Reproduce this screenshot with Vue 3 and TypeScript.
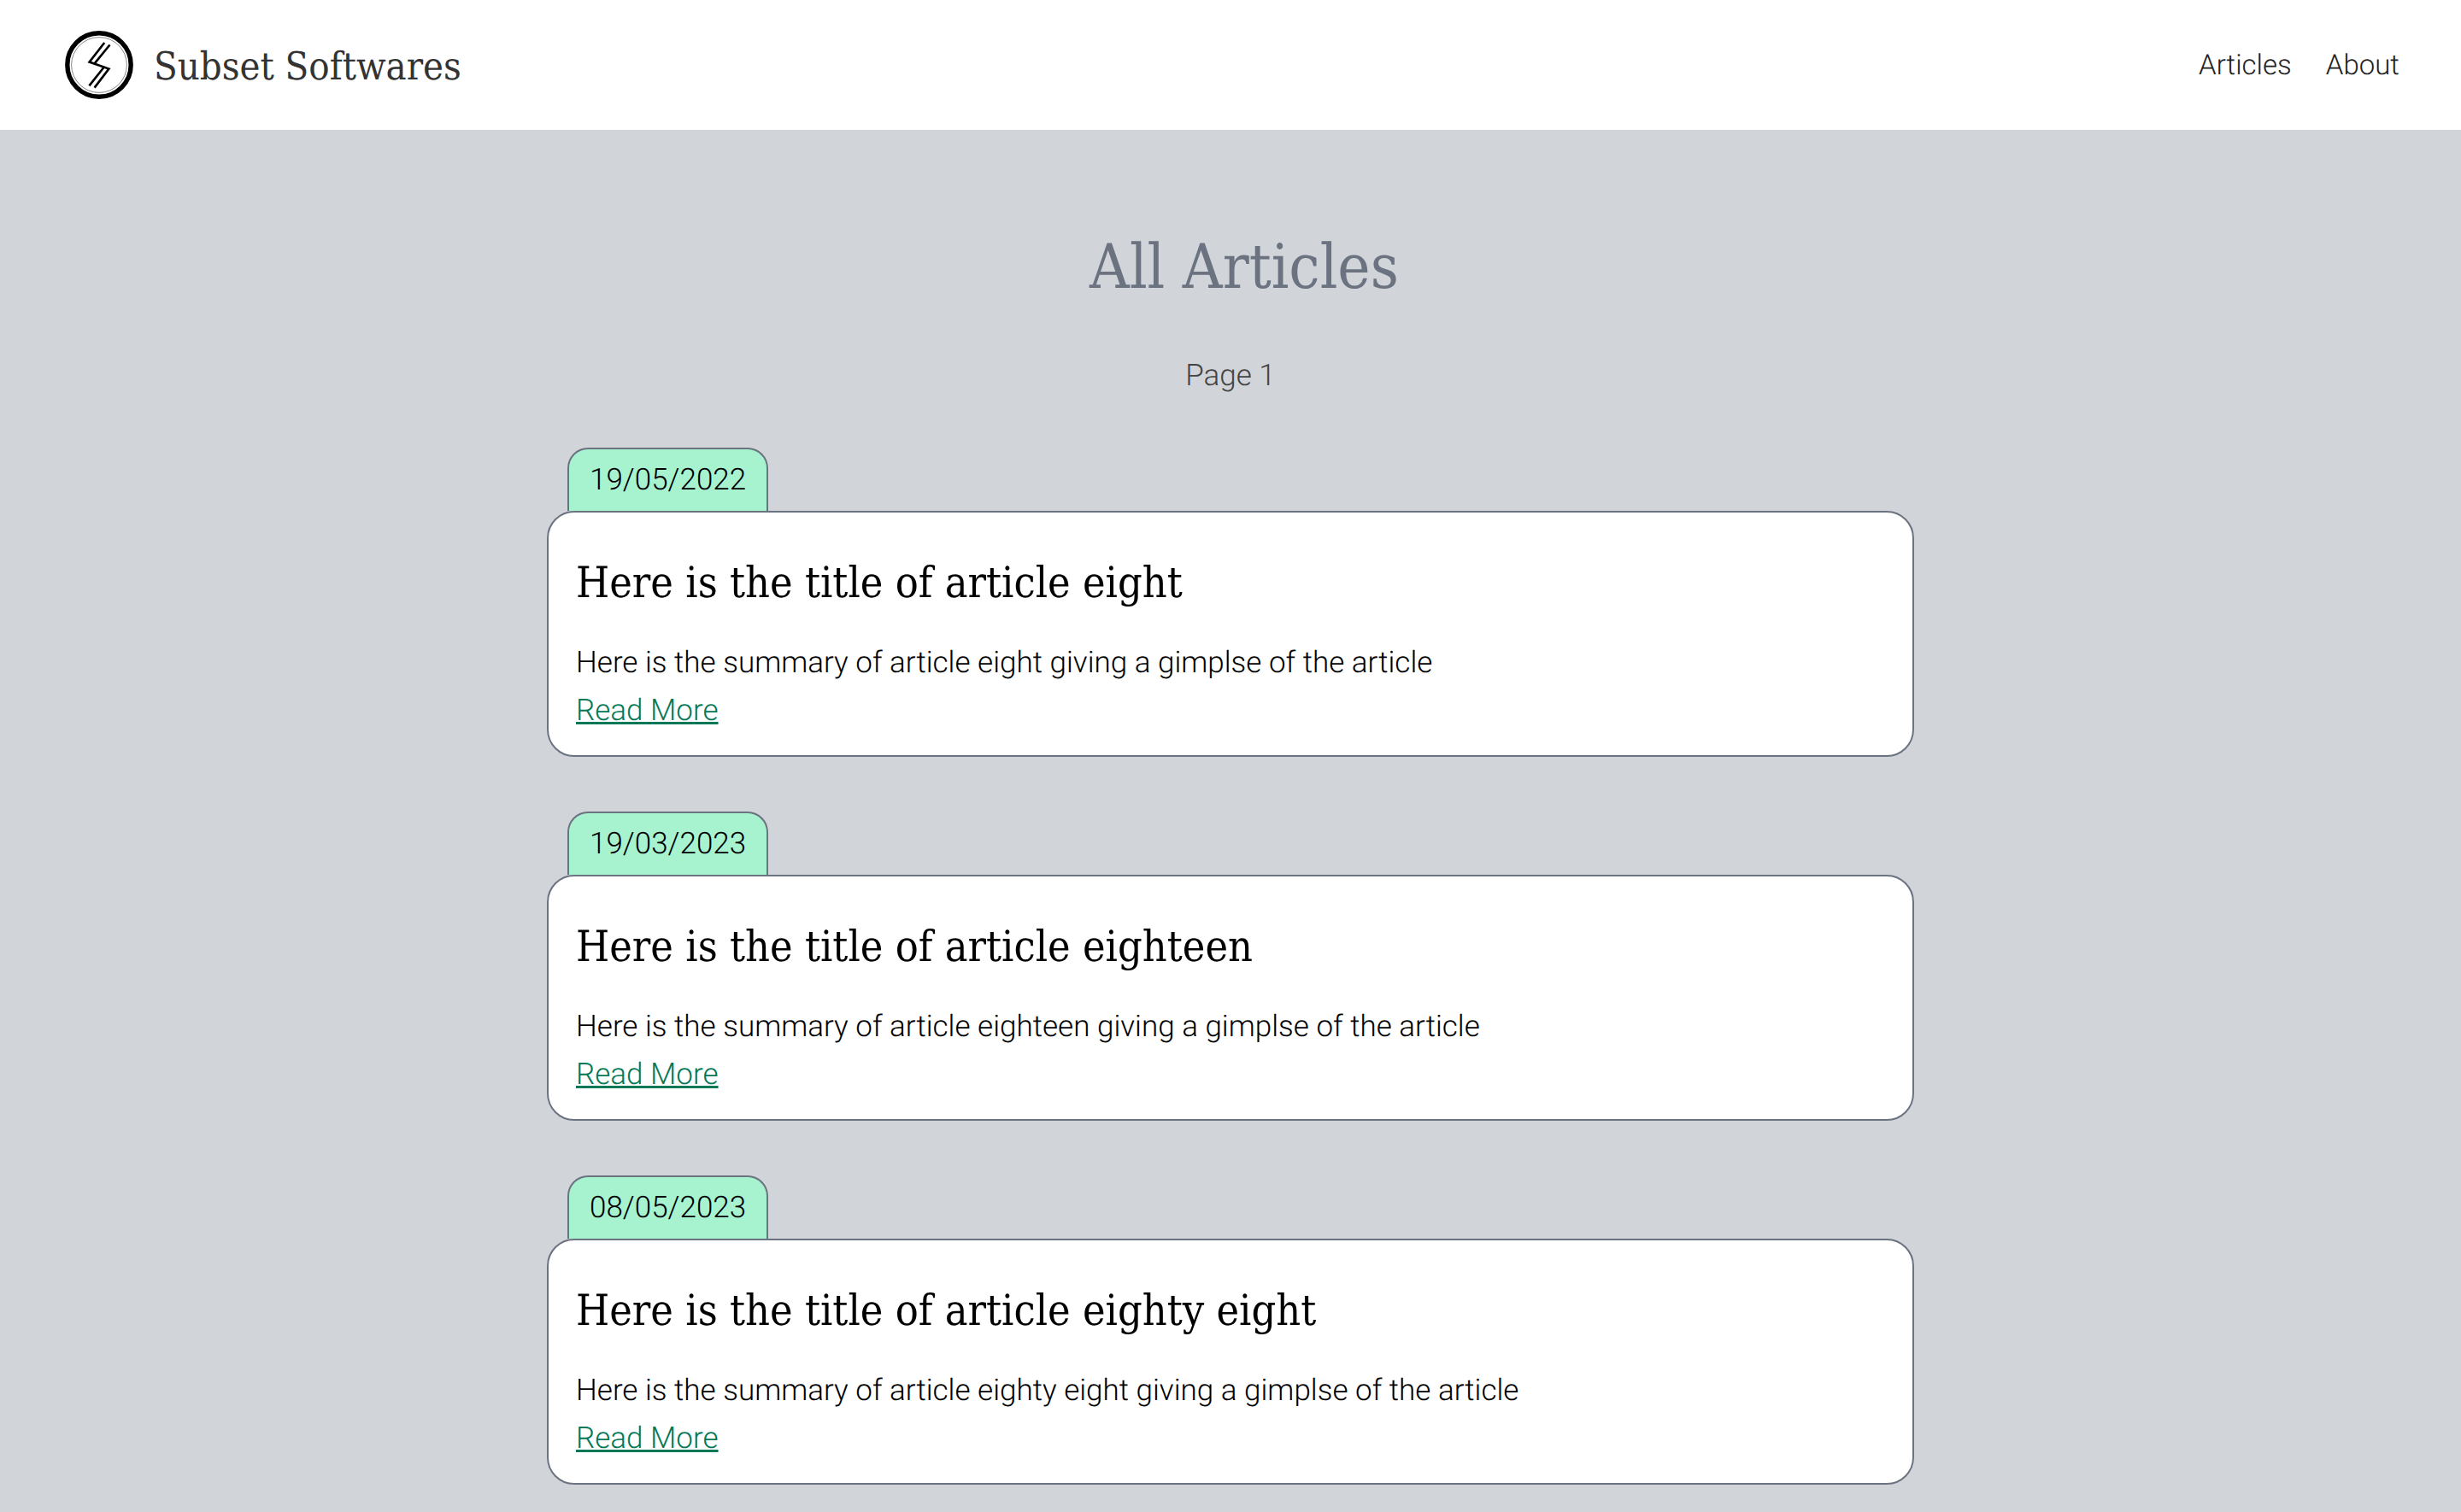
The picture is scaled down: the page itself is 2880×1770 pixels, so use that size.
<script setup lang="ts">
interface Article {
  date: string
  title: string
  summary: string
}

const articles: Article[] = [
  {
    date: '19/05/2022',
    title: 'Here is the title of article eight',
    summary: 'Here is the summary of article eight giving a gimplse of the article',
  },
  {
    date: '19/03/2023',
    title: 'Here is the title of article eighteen',
    summary: 'Here is the summary of article eighteen giving a gimplse of the article',
  },
  {
    date: '08/05/2023',
    title: 'Here is the title of article eighty eight',
    summary: 'Here is the summary of article eighty eight giving a gimplse of the article',
  },
]
</script>

<template>
  <div class="page">
    <header class="header">
      <a class="brand" href="#">
        <svg class="logo" viewBox="0 0 80 80" aria-hidden="true">
          <circle cx="40" cy="40" r="37.2" fill="#fff" stroke="#000" stroke-width="5.4" />
          <circle cx="40" cy="40" r="32.4" fill="none" stroke="#555" stroke-width="0.7" />
          <g fill="none" stroke="#000" stroke-width="2.6" stroke-linejoin="miter">
            <path d="M46.2 14 L28.6 36.6 L51.4 44.6 L34.6 66.6" />
            <path d="M52.5 16.5 L34.6 38.4" />
            <path d="M45.6 42.8 L28.4 64.4" />
          </g>
        </svg>
        <span class="brand-name">Subset Softwares</span>
      </a>
      <nav class="nav">
        <a href="#articles">Articles</a>
        <a href="#about">About</a>
      </nav>
    </header>

    <main id="articles" class="main">
      <h1 class="heading">All Articles</h1>
      <p class="page-number">Page 1</p>
      <article v-for="article in articles" :key="article.title" class="article">
        <time class="date">{{ article.date }}</time>
        <div class="card">
          <h2 class="title">{{ article.title }}</h2>
          <p class="summary">{{ article.summary }}</p>
          <a class="more" href="#">Read More</a>
        </div>
      </article>
    </main>
  </div>
</template>

<style>
body {
  margin: 0;
  background: #d1d5da;
}
</style>

<style scoped>
.page {
  font-family: Roboto, "Liberation Sans", sans-serif;
  font-size: 35px;
  font-weight: 300;
  line-height: 56px;
  text-rendering: geometricPrecision;
  color: #000;
  background: #d1d5da;
}

.header {
  display: flex;
  align-items: center;
  justify-content: space-between;
  height: 152px;
  padding: 0 72px 0 76px;
  box-sizing: border-box;
  background: #fff;
}

.brand {
  display: flex;
  align-items: center;
  gap: 24px;
  color: #333;
  text-decoration: none;
}

.logo {
  width: 80px;
  height: 80px;
}

.brand-name,
.heading,
.title {
  font-family: "Roboto Slab", "DejaVu Serif Condensed", "DejaVu Serif", serif;
}

.brand-name {
  padding-top: 4px;
  font-size: 45px;
}

.nav {
  display: flex;
  gap: 40px;
  padding-top: 2px;
  font-size: 33px;
}

.nav a {
  color: #222;
  text-decoration: none;
}

.main {
  display: flex;
  flex-direction: column;
  align-items: center;
  padding: 112px 64px 0;
}

.heading {
  margin: 0;
  padding-left: 32px;
  font-size: 72px;
  font-weight: 400;
  line-height: 96px;
  color: #6b7280;
}

.page-number {
  margin: 52px 0 56px;
  color: #444;
}

.article {
  width: 100%;
  max-width: 1600px;
  margin-bottom: 64px;
}

.article:last-child {
  margin-bottom: 32px;
}

.date {
  display: block;
  box-sizing: border-box;
  width: fit-content;
  height: 74px;
  margin-left: 24px;
  padding: 8px 24px;
  border: 2px solid #6b7280;
  border-bottom: 0;
  border-radius: 24px 24px 0 0;
  background: #a7f3d0;
}

.card {
  padding: 46px 32px 24px;
  border: 2px solid #6b7280;
  border-radius: 32px;
  background: #fff;
}

.title {
  margin: 0 0 30px;
  font-size: 50px;
  font-weight: 400;
  line-height: 72px;
}

.summary {
  margin: 0;
}

.more {
  display: block;
  width: fit-content;
  color: #047857;
  text-decoration-thickness: 3px;
}
</style>
